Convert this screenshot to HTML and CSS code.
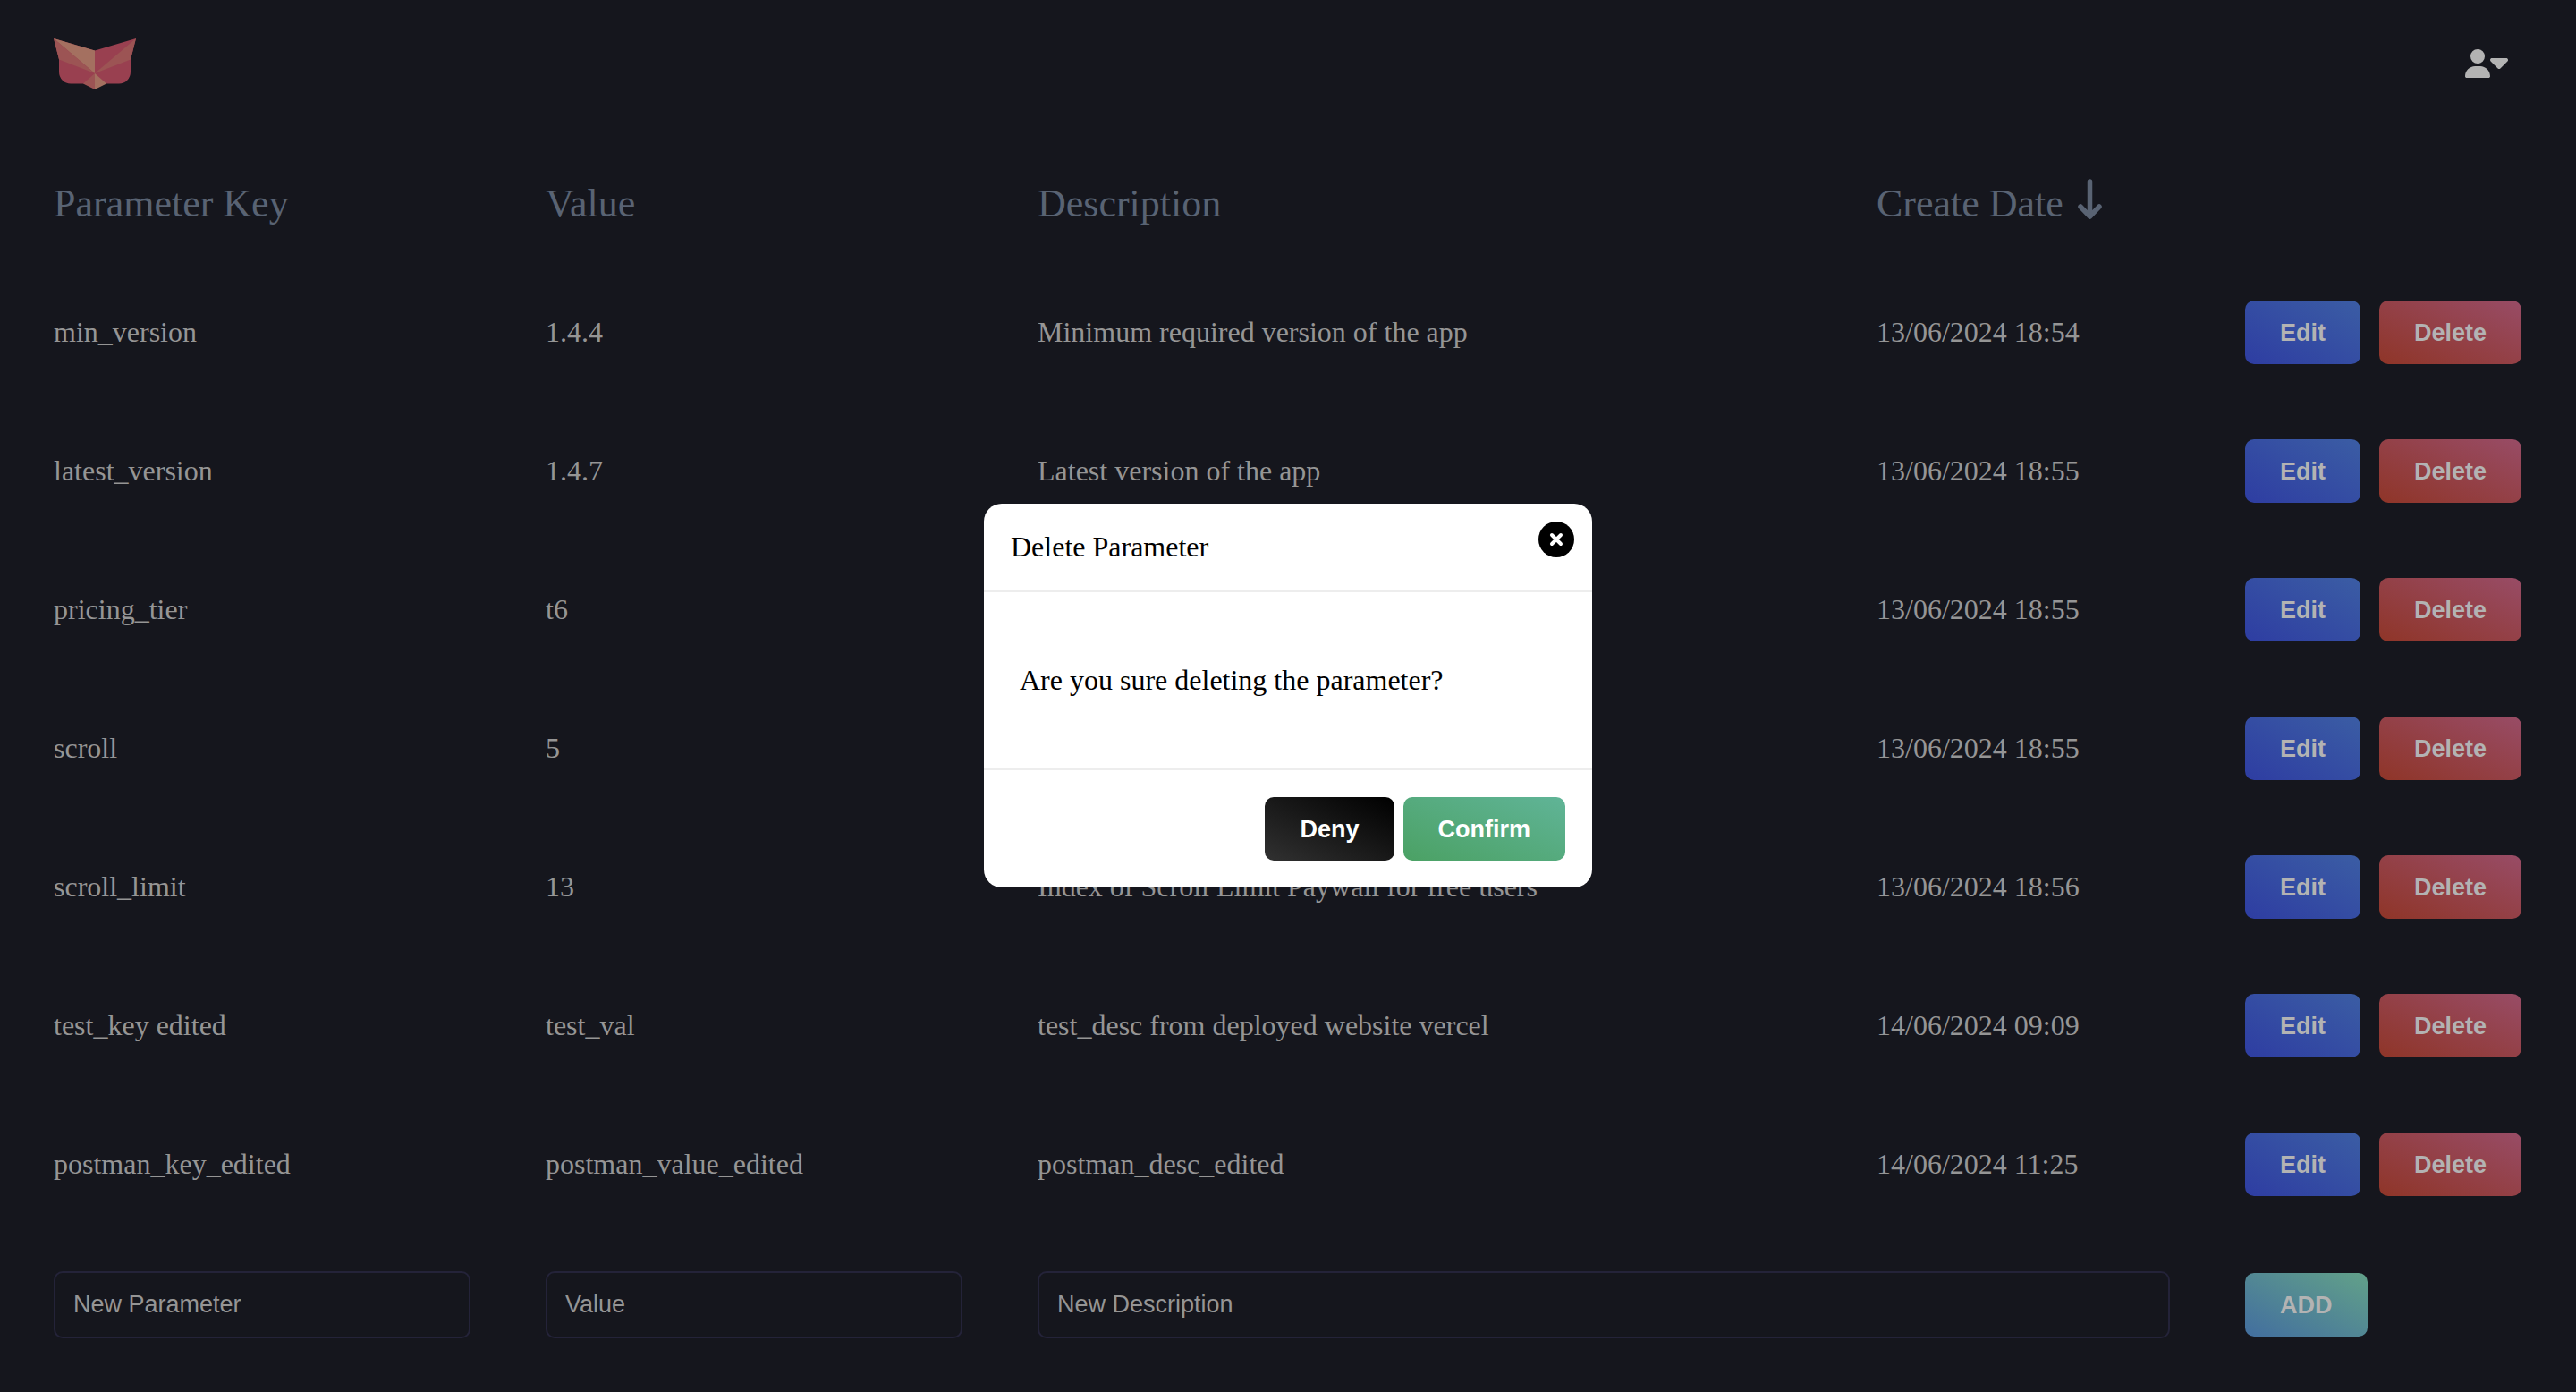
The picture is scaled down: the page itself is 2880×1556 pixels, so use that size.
FILE: index.html
```html
<!DOCTYPE html>
<html lang="en">
<head>
<meta charset="utf-8">
<meta name="viewport" content="width=device-width, initial-scale=1">
<title>Parameters</title>
<link rel="stylesheet" href="styles.css">
</head>
<body>
<header class="topbar">
  <a class="logo" href="#" aria-label="Home">
    <svg width="93" height="57" viewBox="0 0 93 57">
      <path d="M6 23.500V37.500A13 13 0 0 0 19 50.500H73A13 13 0 0 0 86 37.500V23.500L92 0L46 13.500L0 0Z" fill="#994050"/>
      <path d="M0 0L46 13.500V39Z" fill="#a47060"/>
      <path d="M0 0L46 39L6 23.500Z" fill="#9c5454"/>
      <path d="M92 0L46 39L86 23.500Z" fill="#9c5454"/>
      <path d="M46 39L33 50.500L46 57Z" fill="#9c5454"/>
      <path d="M46 39L59 50.500L46 57Z" fill="#a47060"/>
    </svg>
  </a>
  <button class="account" type="button" aria-label="Account menu">
    <svg width="28" height="32" viewBox="0 0 448 512"><path fill="currentColor" d="M224 256A128 128 0 1 0 224 0a128 128 0 1 0 0 256zm-45.700 48C79.800 304 0 383.800 0 482.300C0 498.700 13.300 512 29.700 512H418.300c16.400 0 29.700-13.300 29.700-29.700C448 383.800 368.200 304 269.700 304H178.300z"/></svg>
    <svg width="20" height="32" viewBox="0 0 320 512"><path fill="currentColor" d="M137.400 342.600c12.500 12.500 32.800 12.500 45.300 0l128-128c9.200-9.200 11.900-22.900 6.900-34.900s-16.600-19.800-29.600-19.800L32 160c-12.900 0-24.600 7.800-29.600 19.800s-2.200 25.700 6.900 34.900l128 128z"/></svg>
  </button>
</header>
<main class="content">
  <table class="params">
    <colgroup><col class="col-text"><col class="col-text"><col><col class="col-date"><col class="col-actions"></colgroup>
    <thead>
      <tr><th>Parameter Key</th><th>Value</th><th>Description</th>
      <th>Create Date <svg class="sort" width="29" height="46" viewBox="0 0 29 46"><path d="M14.500 3V42M4 31L14.500 42L25 31" fill="none" stroke="currentColor" stroke-width="5.500" stroke-linecap="round" stroke-linejoin="round"/></svg></th>
      <th></th></tr>
    </thead>
    <tbody>
      <tr><td>min_version</td><td>1.4.4</td><td>Minimum required version of the app</td><td>13/06/2024 18:54</td><td><div class="actions"><button class="btn edit" type="button">Edit</button><button class="btn delete" type="button">Delete</button></div></td></tr>
      <tr><td>latest_version</td><td>1.4.7</td><td>Latest version of the app</td><td>13/06/2024 18:55</td><td><div class="actions"><button class="btn edit" type="button">Edit</button><button class="btn delete" type="button">Delete</button></div></td></tr>
      <tr><td>pricing_tier</td><td>t6</td><td></td><td>13/06/2024 18:55</td><td><div class="actions"><button class="btn edit" type="button">Edit</button><button class="btn delete" type="button">Delete</button></div></td></tr>
      <tr><td>scroll</td><td>5</td><td></td><td>13/06/2024 18:55</td><td><div class="actions"><button class="btn edit" type="button">Edit</button><button class="btn delete" type="button">Delete</button></div></td></tr>
      <tr><td>scroll_limit</td><td>13</td><td>Index of Scroll Limit Paywall for free users</td><td>13/06/2024 18:56</td><td><div class="actions"><button class="btn edit" type="button">Edit</button><button class="btn delete" type="button">Delete</button></div></td></tr>
      <tr><td>test_key edited</td><td>test_val</td><td>test_desc from deployed website vercel</td><td>14/06/2024 09:09</td><td><div class="actions"><button class="btn edit" type="button">Edit</button><button class="btn delete" type="button">Delete</button></div></td></tr>
      <tr><td>postman_key_edited</td><td>postman_value_edited</td><td>postman_desc_edited</td><td>14/06/2024 11:25</td><td><div class="actions"><button class="btn edit" type="button">Edit</button><button class="btn delete" type="button">Delete</button></div></td></tr>
      <tr>
        <td><input class="field" type="text" placeholder="New Parameter" aria-label="New Parameter"></td>
        <td><input class="field" type="text" placeholder="Value" aria-label="Value"></td>
        <td colspan="2"><input class="field" type="text" placeholder="New Description" aria-label="New Description"></td>
        <td><div class="actions"><button class="btn add" type="button">ADD</button></div></td>
      </tr>
    </tbody>
  </table>
</main>
<div class="overlay">
  <section class="modal" role="dialog" aria-modal="true" aria-labelledby="modal-title">
    <h2 class="modal-title" id="modal-title">Delete Parameter</h2>
    <button class="close" type="button" aria-label="Close">
      <svg width="40" height="40" viewBox="0 0 40 40"><path d="M15 15L25 25M25 15L15 25" stroke="#fff" stroke-width="4" stroke-linecap="round"/></svg>
    </button>
    <p class="modal-body">Are you sure deleting the parameter?</p>
    <div class="modal-footer"><button class="btn deny" type="button">Deny</button><button class="btn confirm" type="button">Confirm</button></div>
  </section>
</div>
</body>
</html>
```
FILE: styles.css
```css
* {
  box-sizing: border-box;
}

body {
  margin: 0;
  min-height: 100vh;
  background: #15161d;
  color: #959595;
  font-family: "Liberation Serif", "Times New Roman", serif;
  font-size: 32px;
  line-height: 37px;
}

.topbar {
  display: flex;
  justify-content: space-between;
  align-items: center;
  height: 142px;
  padding: 0 76px 0 60px;
}

.logo svg,
.account svg,
.close svg {
  display: block;
}

.account {
  display: flex;
  padding: 0;
  border: 0;
  background: none;
  color: #b3b3b3;
}

.content {
  padding: 18px 18px 16px;
}

.params {
  width: 100%;
  table-layout: fixed;
  border-collapse: collapse;
}

.col-text {
  width: 550px;
}

.col-date {
  width: 412px;
}

.col-actions {
  width: 394px;
}

th,
td {
  padding: 42px;
  text-align: left;
  white-space: nowrap;
}

th {
  padding-bottom: 40px;
  color: #596373;
  font-size: 44px;
  line-height: 52px;
  font-weight: 400;
}

.sort {
  margin: -4px 0 0 4px;
  vertical-align: -4px;
}

.actions {
  display: flex;
  gap: 21px;
}

.btn {
  height: 71px;
  padding: 0 39px;
  border: 0;
  border-radius: 10px;
  color: #b3b3b3;
  font: bold 27px/32px "Liberation Sans", Arial, sans-serif;
}

.edit {
  background: linear-gradient(to top right, #2e3da2, #3b5da4);
}

.delete {
  background: linear-gradient(to top right, #8f3528, #984c66);
}

.add {
  background: linear-gradient(to top right, #426e9f, #62a189);
}

.field {
  display: block;
  width: 100%;
  height: 75px;
  padding: 0 20px;
  border: 2px solid #242339;
  border-radius: 10px;
  background: transparent;
  color: #959595;
  font: 27px/32px "Liberation Sans", Arial, sans-serif;
}

.field::placeholder {
  color: #959595;
  opacity: 1;
}

.overlay {
  position: fixed;
  inset: 0;
  display: flex;
  align-items: center;
  justify-content: center;
  padding-bottom: 1px;
}

.modal {
  position: relative;
  width: 680px;
  border-radius: 20px;
  background: #fff;
  color: #000;
}

.modal-title {
  margin: 0;
  padding: 30px;
  border-bottom: 2px solid #ededed;
  font-size: 32px;
  line-height: 37px;
  font-weight: 400;
}

.close {
  position: absolute;
  top: 20px;
  right: 20px;
  padding: 0;
  border: 0;
  border-radius: 50%;
  background: #000;
}

.modal-body {
  margin: 0;
  padding: 80px 40px;
}

.modal-footer {
  display: flex;
  justify-content: flex-end;
  gap: 10px;
  padding: 30px;
  border-top: 2px solid #ededed;
}

.deny,
.confirm {
  color: #fff;
}

.deny {
  background: linear-gradient(to top right, #313131, #000);
}

.confirm {
  background: linear-gradient(to top right, #4ba164, #60b497);
}
```
